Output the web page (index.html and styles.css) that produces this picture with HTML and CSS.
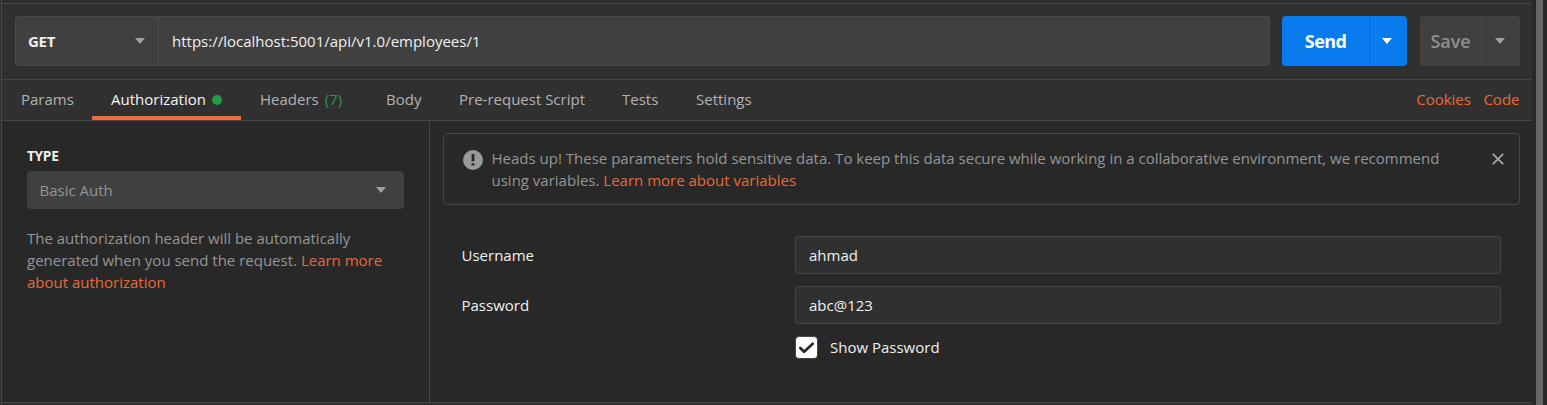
FILE: index.html
```html
<!DOCTYPE html>
<html lang="en">
<head>
<meta charset="utf-8">
<title>Request builder</title>
<link rel="stylesheet" href="styles.css">
</head>
<body>
<div class="app">
  <div class="edge"></div>
  <main class="builder">
    <div class="top-strip"></div>
    <section class="request">
      <div class="url-bar">
        <div class="method"><span>GET</span><i class="caret"></i></div>
        <div class="url">https://localhost:5001/api/v1.0/employees/1</div>
      </div>
      <div class="split send"><button class="main">Send</button><button class="more" aria-label="Send options"><i class="caret"></i></button></div>
      <div class="split save"><button class="main">Save</button><button class="more" aria-label="Save options"><i class="caret"></i></button></div>
    </section>
    <nav class="tabs">
      <a class="tab params">Params</a>
      <a class="tab authorization active">Authorization<i class="dot"></i></a>
      <a class="tab headers">Headers<span class="count">(7)</span></a>
      <a class="tab body-tab">Body</a>
      <a class="tab script">Pre-request Script</a>
      <a class="tab tests">Tests</a>
      <a class="tab settings">Settings</a>
      <div class="links"><a>Cookies</a><a>Code</a></div>
    </nav>
    <section class="content">
      <aside class="type-pane">
        <h2>TYPE</h2>
        <div class="select"><span>Basic Auth</span><i class="caret"></i></div>
        <p>The authorization header will be automatically<br>generated when you send the request. <a>Learn more<br>about authorization</a></p>
      </aside>
      <div class="auth-pane">
        <div class="notice">
          <svg class="alert" viewBox="0 0 20 20"><circle cx="10" cy="10" r="10" fill="#999"/><path d="M8.6 4h2.8v7.3H8.6zM8.6 13.2h2.8v2.4H8.6z" fill="#282828"/></svg>
          <p>Heads up! These parameters hold sensitive data. To keep this data secure while working in a collaborative environment, we recommend<br>using variables. <a>Learn more about variables</a></p>
          <svg class="close" viewBox="0 0 12 12"><path d="M.8.8l10.4 10.4M11.2.8L.8 11.2" stroke="#a6a6a6" stroke-width="1.8"/></svg>
        </div>
        <div class="form">
          <div class="row"><label>Username</label><div class="input">ahmad</div></div>
          <div class="row"><label>Password</label><div class="input">abc@123</div></div>
          <div class="show">
            <span class="box"><svg viewBox="0 0 22 22"><path d="M4.5 11.5l4 4L17.5 7" fill="none" stroke="#282828" stroke-width="2.8" stroke-linecap="round" stroke-linejoin="round"/></svg></span>
            <span>Show Password</span>
          </div>
        </div>
      </div>
    </section>
    <div class="bottom-strip"></div>
  </main>
  <div class="gutter"><div class="thumb"></div></div>
</div>
</body>
</html>
```

FILE: styles.css
```css
* { box-sizing: border-box; }
body {
  margin: 0;
  background: #282828;
  color: #f0f0f0;
  font: 15px/22px "Open Sans", "Noto Sans", sans-serif;
  overflow: hidden;
}
h2, p { margin: 0; }
a { color: #e8683a; }
.app { display: flex; width: 1547px; height: 405px; }
.edge { width: 2px; background: #303030; border-right: 1px solid #484848; }
.builder { width: 1530px; display: flex; flex-direction: column; }
.top-strip { height: 4px; background: #2c2c2c; border-bottom: 1px solid #464646; }
.request {
  height: 76px;
  padding: 12px 12px 0 13px;
  display: flex;
  background: #303030;
  border-bottom: 1px solid #464646;
}
.url-bar {
  width: 1255px;
  height: 50px;
  display: flex;
  background: #404040;
  border: 1px solid #494949;
  border-radius: 3px;
}
.method {
  width: 143px;
  padding: 0 13px 0 12px;
  display: flex;
  align-items: center;
  justify-content: space-between;
  border-right: 1px solid #494949;
  font-size: 15px;
  font-weight: 700;
  letter-spacing: -0.3px;
}
.url { padding-left: 13px; line-height: 48px; font-weight: 500; }
.caret {
  border-left: 5px solid transparent;
  border-right: 5px solid transparent;
  border-top: 6px solid #a0a0a0;
}
.split { height: 50px; display: flex; border-radius: 4px; overflow: hidden; }
.split button {
  height: 50px;
  margin: 0;
  padding: 0;
  border: 0;
  background: transparent;
  color: inherit;
  font: 600 18px/50px "Open Sans", sans-serif;
  letter-spacing: -0.1px;
}
.split .more { padding-right: 3px; display: flex; align-items: center; justify-content: center; border-left: 1px solid; }
.send { width: 125px; margin-left: 12px; background: #097bed; color: #fff; }
.split.send .main { width: 87px; font-weight: 700; letter-spacing: -0.6px; }
.send .more { width: 38px; border-color: #0a6fd6; }
.send .caret { border-top-color: #fff; }
.save { width: 100px; margin-left: 13px; background: #404040; color: #8f8f8f; }
.save .main { width: 61px; }
.save .more { width: 39px; border-color: #4a4a4a; }
.tabs {
  height: 41px;
  display: flex;
  background: #303030;
  border-bottom: 1px solid #464646;
  white-space: nowrap;
}
.tab { height: 40px; padding-left: 19px; line-height: 38px; color: #b2b2b2; }
.params { width: 90px; }
.authorization { width: 149px; display: flex; align-items: flex-start; }
.active { color: #f5f5f5; font-weight: 500; box-shadow: inset 0 -4px #f26b3a; }
.dot { width: 10px; height: 10px; margin: 15px 0 0 6px; border-radius: 50%; background: #259b48; }
.headers { width: 126px; }
.count { margin-left: 6px; color: #259b48; }
.body-tab { width: 73px; }
.script { width: 163px; }
.tests { width: 74px; }
.links { margin-left: auto; padding-right: 12.5px; display: flex; gap: 12.5px; line-height: 38px; }
.content { height: 281px; display: flex; }
.type-pane { width: 428px; padding: 24px 25px 0; border-right: 1px solid #464646; color: #959595; }
.type-pane h2 { color: #f0f0f0; font-size: 13.75px; line-height: 22px; font-weight: 700; letter-spacing: -0.35px; }
.select {
  width: 377px;
  height: 38px;
  margin: 4px 0 18px;
  padding: 0 18px 0 12.5px;
  display: flex;
  align-items: center;
  justify-content: space-between;
  background: #404040;
  border-radius: 4px;
}
.auth-pane { flex: 1; padding: 12px 12px 0 13px; }
.notice {
  height: 72px;
  padding: 13px 15px 0 19px;
  display: flex;
  border: 1px solid #464646;
  border-radius: 4px;
  color: #959595;
  white-space: nowrap;
}
.alert { width: 20px; height: 20px; margin: 3px 8.5px 0 0; }
.close { width: 12px; height: 12px; margin: 6px 0 0 auto; }
.form { padding: 31px 19px 0 18px; display: flex; flex-direction: column; gap: 12px; }
.row { display: flex; align-items: center; font-weight: 500; }
.row label { width: 334px; padding-left: 0.5px; }
.input {
  flex: 1;
  height: 38px;
  padding-left: 13px;
  line-height: 36px;
  background: #303030;
  border: 1px solid #464646;
  border-radius: 3px;
}
.show { margin-left: 334px; display: flex; gap: 12px; font-weight: 500; }
.box { width: 23px; height: 23px; border: 1px solid #464646; border-radius: 4px; background: #fff; }
.box svg { display: block; width: 21px; height: 21px; }
.bottom-strip { height: 3px; border-top: 1px solid #464646; background: #303030; }
.gutter { width: 15px; padding-left: 4px; }
.thumb { width: 7px; height: 405px; background: #666; }
```
